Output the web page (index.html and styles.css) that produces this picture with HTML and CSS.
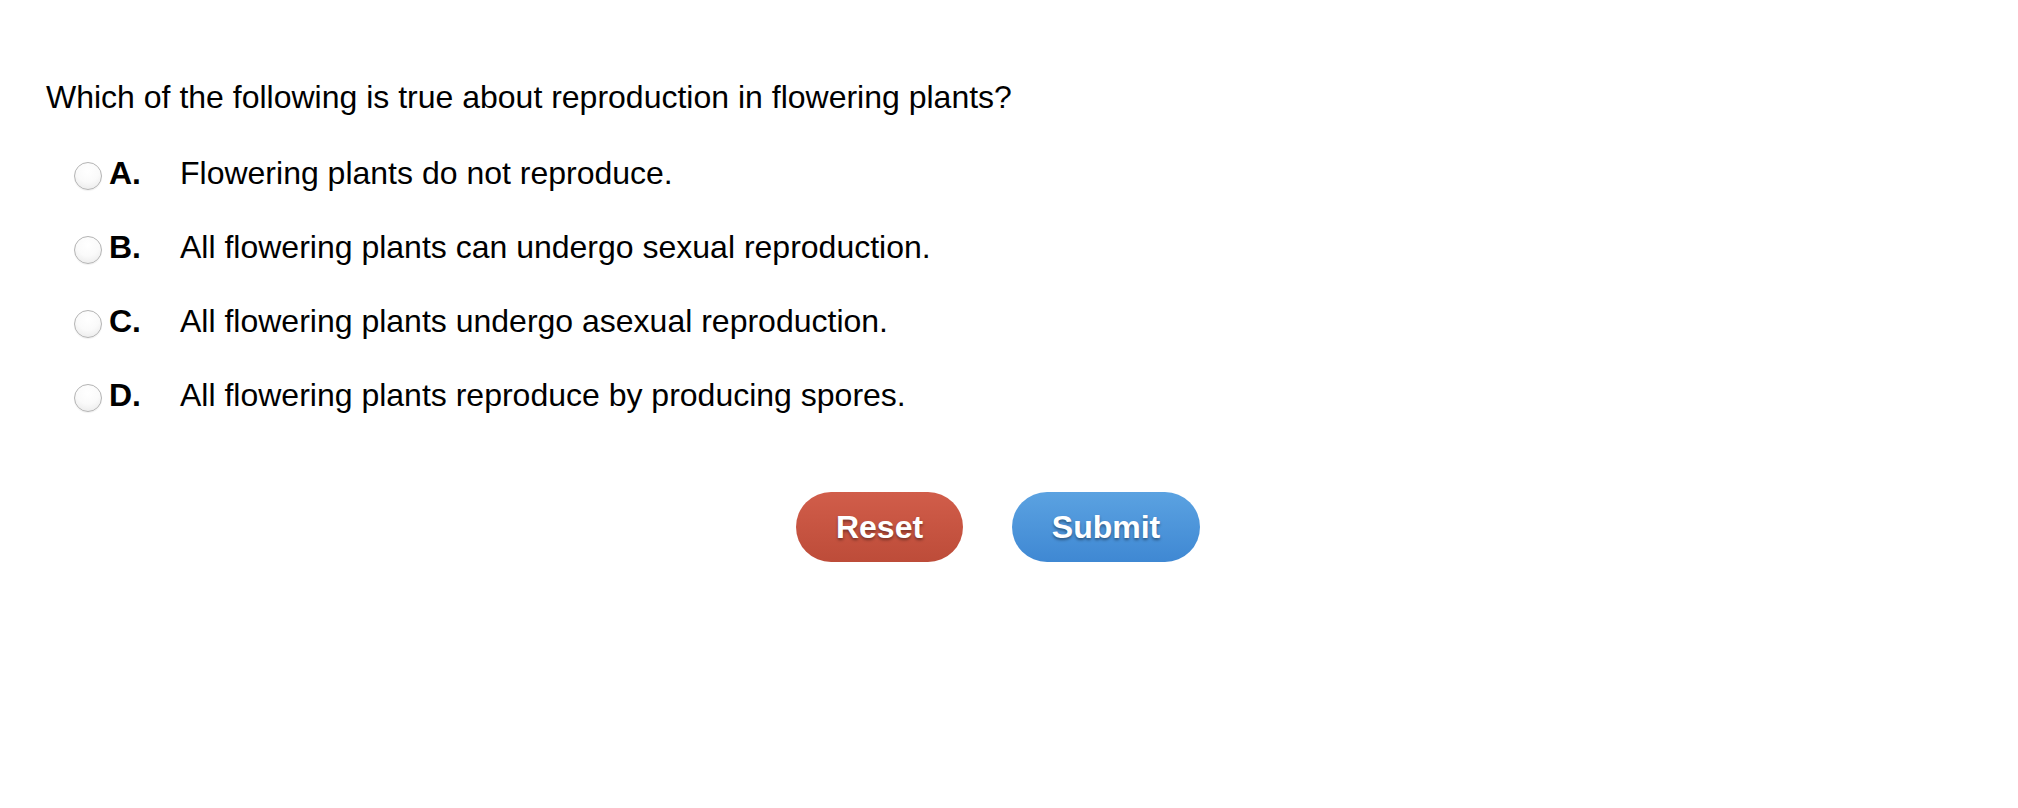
FILE: index.html
```html
<!DOCTYPE html>
<html>
<head>
<meta charset="utf-8">
<link rel="stylesheet" href="styles.css">
</head>
<body>
<div class="quiz">
  <p class="question">Which of the following is true about reproduction in flowering plants?</p>
  <div class="options">
    <label class="option"><span class="radio"></span><span class="letter">A.</span><span class="text">Flowering plants do not reproduce.</span></label>
    <label class="option"><span class="radio"></span><span class="letter">B.</span><span class="text">All flowering plants can undergo sexual reproduction.</span></label>
    <label class="option"><span class="radio"></span><span class="letter">C.</span><span class="text">All flowering plants undergo asexual reproduction.</span></label>
    <label class="option"><span class="radio"></span><span class="letter">D.</span><span class="text">All flowering plants reproduce by producing spores.</span></label>
  </div>
  <div class="actions">
    <button class="btn btn-reset">Reset</button>
    <button class="btn btn-submit">Submit</button>
  </div>
</div>
</body>
</html>
```
FILE: styles.css
```css
html, body {
  margin: 0;
  padding: 0;
  background: #fff;
}
body {
  font-family: "Liberation Sans", Arial, sans-serif;
  color: #000;
}
.quiz {
  padding: 79px 0 0 46px;
}
.question {
  margin: 0;
  font-size: 32px;
  line-height: 37px;
}
.options {
  display: flex;
  flex-direction: column;
  gap: 37px;
  margin-top: 39px;
  padding-left: 28px;
}
.option {
  display: flex;
  align-items: flex-start;
  height: 37px;
  line-height: 37px;
  font-size: 32px;
}
.radio {
  width: 26px;
  height: 26px;
  border-radius: 50%;
  border: 1px solid #b4b4b4;
  background: radial-gradient(circle at 50% 30%, #ffffff 0%, #fafafa 50%, #e6e6e6 100%);
  box-shadow: 0 1px 1px rgba(0,0,0,0.06);
  flex: none;
  margin-top: 7px;
}
.letter {
  font-weight: bold;
  width: 71px;
  margin-left: 7px;
}
.actions {
  display: flex;
  justify-content: center;
  gap: 49px;
  margin-top: 78px;
  padding-right: 68px;
}
.btn {
  height: 70px;
  border: none;
  border-radius: 35px;
  color: #fff;
  font-family: "Liberation Sans", Arial, sans-serif;
  font-weight: bold;
  font-size: 32px;
  text-shadow: 0 2px 3px rgba(0,0,0,0.4);
  padding: 0;
}
.btn-reset {
  width: 167px;
  background: linear-gradient(#d15d4a, #bd4c39);
}
.btn-submit {
  width: 188px;
  background: linear-gradient(#5ba2e1, #3f88d3);
}
```
